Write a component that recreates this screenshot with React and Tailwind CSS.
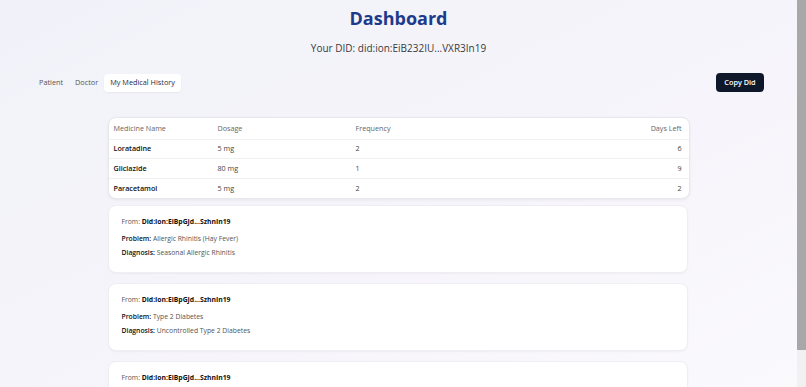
import { useState } from "react";

const medicines = [
  { name: "Loratadine", dosage: "5 mg", frequency: 2, daysLeft: 6 },
  { name: "Gliclazide", dosage: "80 mg", frequency: 1, daysLeft: 9 },
  { name: "Paracetamol", dosage: "5 mg", frequency: 2, daysLeft: 2 },
];

const records = [
  { from: "Did:Ion:EiBpGJd...SzhnIn19", problem: "Allergic Rhinitis (Hay Fever)", diagnosis: "Seasonal Allergic Rhinitis" },
  { from: "Did:Ion:EiBpGJd...SzhnIn19", problem: "Type 2 Diabetes", diagnosis: "Uncontrolled Type 2 Diabetes" },
  { from: "Did:Ion:EiBpGJd...SzhnIn19", problem: "Hypertension", diagnosis: "Stage 1 Hypertension" },
];

const tabs = ["Patient", "Doctor", "My Medical History"];

const App = () => {
  const [activeTab, setActiveTab] = useState("My Medical History");

  return (
    <div className="flex h-screen overflow-hidden font-['Open_Sans',sans-serif] text-[#111111]">
      <div className="min-w-0 flex-1 overflow-hidden bg-gradient-to-br from-[#f1f2f9] via-[#f6f4fb] to-[#faf9fc]">
        <div className="px-[33px] pt-[3px]">
          <h1 className="text-center text-[18px] leading-[30px] font-bold text-[#1e3a8a]">Dashboard</h1>
          <p className="mt-[8px] text-center text-[10px] leading-[14px] text-[#3a3a3a]">
            Your DID: did:ion:EiB232IU...VXR3In19
          </p>

          <div className="mt-[18px] flex items-center justify-between">
            <div className="flex items-center">
              {tabs.map((t) => (
                <button
                  key={t}
                  onClick={() => setActiveTab(t)}
                  className={`h-[18px] rounded px-[6px] text-[7.3px] ${
                    activeTab === t
                      ? "bg-white font-medium text-[#1f2a44] shadow-[0_1px_2px_rgba(0,0,0,0.05)]"
                      : "text-[#555555]"
                  }`}
                >
                  {t}
                </button>
              ))}
            </div>
            <button className="h-[19px] w-[48px] rounded bg-[#0f172a] text-[7.3px] font-semibold text-white">
              Copy Did
            </button>
          </div>

          <div className="mx-auto mt-[25px] w-[582px]">
            <div className="overflow-hidden rounded-lg border border-[#e8e8ec] bg-white shadow-[0_1px_3px_rgba(0,0,0,0.06)]">
              <table className="w-full text-[7.2px]">
                <thead>
                  <tr className="border-b border-[#f0f0f2] text-[#666666]">
                    <th className="h-[21px] w-[109px] pl-[5px] text-left font-normal">Medicine Name</th>
                    <th className="w-[138px] text-left font-normal">Dosage</th>
                    <th className="text-left font-normal">Frequency</th>
                    <th className="pr-[7px] text-right font-normal">Days Left</th>
                  </tr>
                </thead>
                <tbody>
                  {medicines.map((m, i) => (
                    <tr key={m.name} className={i < medicines.length - 1 ? "border-b border-[#f0f0f2]" : ""}>
                      <td className="h-[19.5px] pl-[5px] font-semibold">{m.name}</td>
                      <td className="text-[#444444]">{m.dosage}</td>
                      <td className="text-[#444444]">{m.frequency}</td>
                      <td className="pr-[7px] text-right text-[#444444]">{m.daysLeft}</td>
                    </tr>
                  ))}
                </tbody>
              </table>
            </div>

            <div className="mt-[6px] flex w-[580px] flex-col gap-[10px]">
              {records.map((r, i) => (
                <div
                  key={i}
                  className="h-[68px] rounded-lg border border-[#efeff3] bg-white px-[13px] pt-[10px] text-[6.8px] shadow-[0_1px_2px_rgba(0,0,0,0.04)]"
                >
                  <p className="leading-[12px] text-[#555555]">
                    From: <span className="font-bold text-[#111111]">{r.from}</span>
                  </p>
                  <p className="mt-[5px] leading-[12px] text-[#555555]">
                    <span className="font-semibold text-[#111111]">Problem:</span> {r.problem}
                  </p>
                  <p className="mt-[2px] leading-[12px] text-[#555555]">
                    <span className="font-semibold text-[#111111]">Diagnosis:</span> {r.diagnosis}
                  </p>
                </div>
              ))}
            </div>
          </div>
        </div>
      </div>
      <div className="flex w-[9px] shrink-0 flex-col bg-[#f1f1f1]">
        <div className="h-[350px] w-full bg-[#a8a8a8]" />
      </div>
    </div>
  );
};

export default App;
